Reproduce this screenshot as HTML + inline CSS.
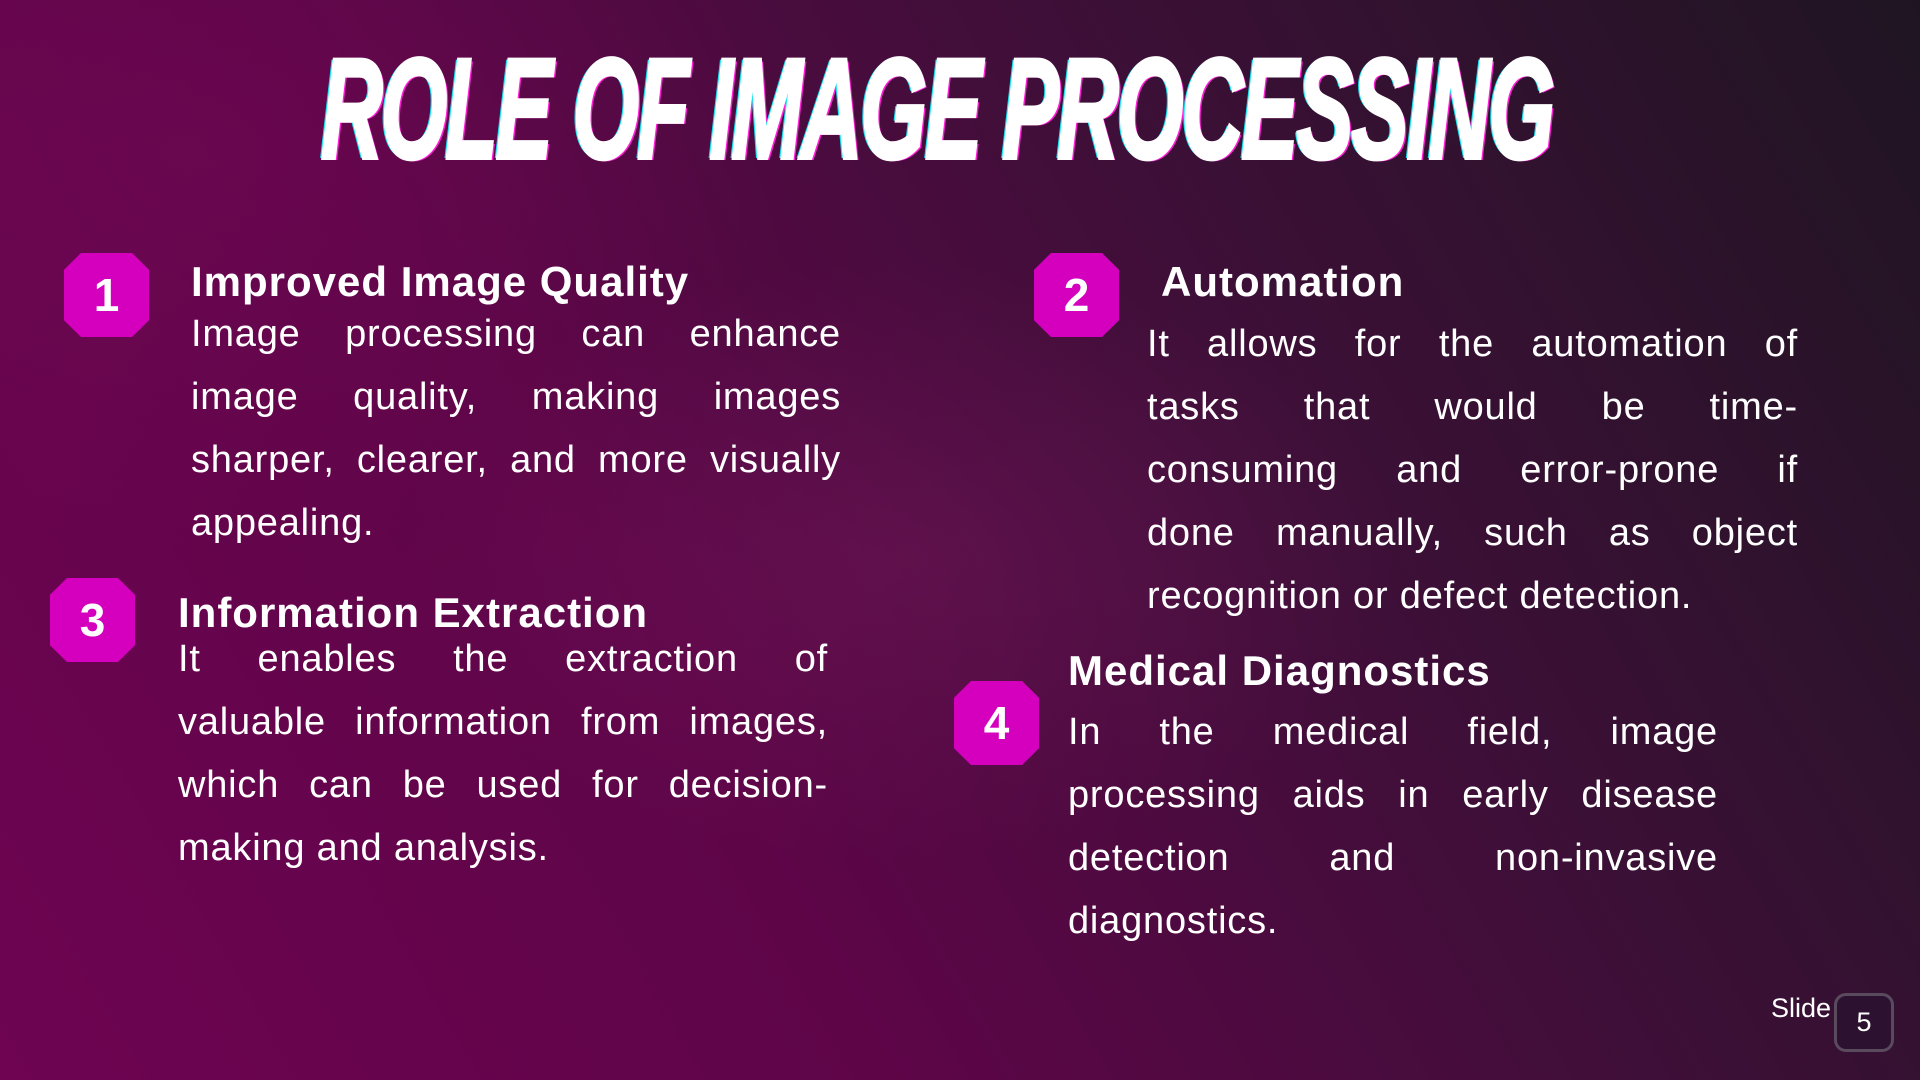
<!DOCTYPE html>
<html><head><meta charset="utf-8"><style>
*{margin:0;padding:0;box-sizing:border-box}
body{width:1920px;height:1080px;overflow:hidden;position:relative;font-family:"Liberation Sans",sans-serif;color:#fff;
background:linear-gradient(60deg,#6e0452 0%,#5e0548 35%,#3e0f38 65%,#1f1522 100%);}
.glow{position:absolute;inset:0;background:radial-gradient(ellipse 500px 300px at 900px 560px,rgba(140,40,110,.25),transparent),radial-gradient(ellipse 600px 400px at 200px 150px,rgba(120,10,90,.35),transparent)}
.title{position:absolute;left:321px;top:40px;width:1232px;height:140px;overflow:visible}
.title span{position:absolute;left:0;top:0;white-space:nowrap;font-weight:bold;font-style:italic;font-size:143px;line-height:140px;transform-origin:0 0;letter-spacing:-3px;color:#fff;-webkit-text-stroke:4px #fff;
text-shadow:-4px 0 0 #19e6f0,4px 2px 0 #ff1fd8}
.badge{position:absolute;width:85px;height:84px;background:#d400bd;clip-path:polygon(20% 0,80% 0,100% 20%,100% 80%,80% 100%,20% 100%,0 80%,0 20%);font-weight:bold;font-size:46px;display:flex;align-items:center;justify-content:center}
.h{position:absolute;font-weight:bold;font-size:42px;line-height:48px;white-space:nowrap;letter-spacing:1px}
.p{position:absolute;width:650px;font-size:38px;line-height:63px;letter-spacing:0.8px}
.p div{text-align:justify;text-align-last:justify;white-space:nowrap}
.p div.l{text-align-last:left}
.slide{position:absolute;left:1771px;top:993px;font-size:27px}
.box{position:absolute;left:1834px;top:993px;width:60px;height:59px;border:3px solid #5a4a5e;border-radius:12px;background:#2c1230;font-size:27px;display:flex;align-items:center;justify-content:center}
</style></head><body>
<div class="glow"></div>
<div class="title"><span id="t">ROLE OF IMAGE PROCESSING</span></div>

<div class="badge" style="left:64px;top:253px">1</div>
<div class="h" style="left:191px;top:258px">Improved Image Quality</div>
<div class="p" style="left:191px;top:303px"><div>Image processing can enhance</div><div>image quality, making images</div><div>sharper, clearer, and more visually</div><div class="l">appealing.</div></div>

<div class="badge" style="left:50px;top:578px">3</div>
<div class="h" style="left:178px;top:589px">Information Extraction</div>
<div class="p" style="left:178px;top:628px"><div>It enables the extraction of</div><div>valuable information from images,</div><div>which can be used for decision-</div><div class="l">making and analysis.</div></div>

<div class="badge" style="left:1034px;top:253px">2</div>
<div class="h" style="left:1161px;top:258px">Automation</div>
<div class="p" style="left:1147px;top:313px;width:651px"><div>It allows for the automation of</div><div>tasks that would be time-</div><div>consuming and error-prone if</div><div>done manually, such as object</div><div class="l">recognition or defect detection.</div></div>

<div class="badge" style="left:954px;top:681px">4</div>
<div class="h" style="left:1068px;top:647px">Medical Diagnostics</div>
<div class="p" style="left:1068px;top:701px"><div>In the medical field, image</div><div>processing aids in early disease</div><div>detection and non-invasive</div><div class="l">diagnostics.</div></div>

<div class="slide">Slide</div>
<div class="box">5</div>
<script>
var t=document.getElementById('t');var w=t.getBoundingClientRect().width;t.style.transform='scaleX('+(1232/w)+')';
</script>
</body></html>
